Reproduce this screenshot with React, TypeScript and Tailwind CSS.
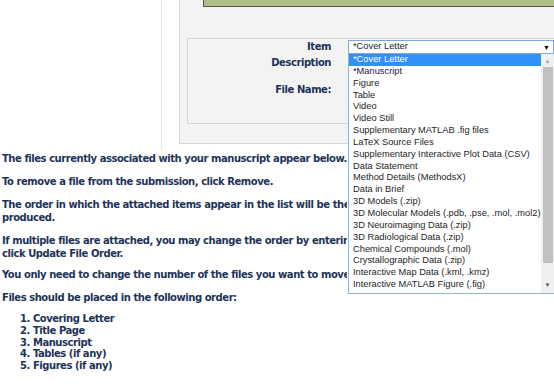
import React from "react";

const options = [
  "*Cover Letter",
  "*Manuscript",
  "Figure",
  "Table",
  "Video",
  "Video Still",
  "Supplementary MATLAB .fig files",
  "LaTeX Source Files",
  "Supplementary Interactive Plot Data (CSV)",
  "Data Statement",
  "Method Details (MethodsX)",
  "Data in Brief",
  "3D Models (.zip)",
  "3D Molecular Models (.pdb, .pse, .mol, .mol2)",
  "3D Neuroimaging Data (.zip)",
  "3D Radiological Data (.zip)",
  "Chemical Compounds (.mol)",
  "Crystallographic Data (.zip)",
  "Interactive Map Data (.kml, .kmz)",
  "Interactive MATLAB Figure (.fig)",
];

const order = ["Covering Letter", "Title Page", "Manuscript", "Tables (if any)", "Figures (if any)"];

export default function App() {
  return (
    <div className="relative h-[389px] w-[554px] overflow-hidden bg-white font-['DejaVu_Sans',Verdana,sans-serif] text-[#1d3358]">
      {/* Top: form panel */}
      <div className="flex h-[150px]">
        <div className="w-[162px] shrink-0 border-r border-[#e6e6e6]" />
        <div className="flex-1 pl-[17px]">
          <div className="h-[144px] border-b border-l border-[#d6d6d6] bg-[#f3f3f3]">
            <div className="ml-[23px] h-[7px] border-b border-l border-[#555] bg-[#adbf86]" />
            <div className="ml-[7px] mt-[31px] h-[86px] border-b border-l border-t border-[#d3d3d3] text-[10px] font-bold tracking-[-0.45px]">
              <div className="flex w-[143px] flex-col items-end leading-[13px]">
                <div className="mt-[1px]">Item</div>
                <div className="mt-[3px]">Description</div>
                <div className="mt-[14px]">File Name:</div>
              </div>
            </div>
          </div>
        </div>
      </div>

      {/* Instructions (right part hidden behind the open dropdown) */}
      <div className="w-[347px] overflow-hidden whitespace-nowrap pl-[2px] pt-[2px] text-[10px] font-bold leading-[13px] tracking-[-0.45px]">
        <p>The files currently associated with your manuscript appear below.</p>
        <p className="mt-[10px]">To remove a file from the submission, click Remove.</p>
        <p className="mt-[10px]">
          The order in which the attached items appear in the list will be the
          <br />
          produced.
        </p>
        <p className="mt-[10px]">
          If multiple files are attached, you may change the order by enterin
          <br />
          click Update File Order.
        </p>
        <p className="mt-[8px]">You only need to change the number of the files you want to move;</p>
        <p className="mt-[10px]">Files should be placed in the following order:</p>
        <ol className="mt-[9px] pl-[18px] leading-[11.8px]">
          {order.map((o, i) => (
            <li key={o}>
              {i + 1}. {o}
            </li>
          ))}
        </ol>
      </div>

      {/* Open select with dropdown */}
      <div className="absolute left-[348px] top-[40px] w-[206px] font-['Liberation_Sans',Arial,sans-serif] text-[9.3px] text-[#1e1e1e]">
        <div className="flex h-[14px] items-center justify-between border border-[#7fa8d8] bg-white pl-[4px] pr-[3px]">
          <span>*Cover Letter</span>
          <span className="text-[7px] leading-none text-black">▼</span>
        </div>
        <div className="flex h-[240px] border-b border-l border-[#8fb4de] bg-white">
          <div className="min-w-0 flex-1 overflow-hidden">
            {options.map((o, i) => (
              <div
                key={o}
                className={`h-[11.85px] whitespace-nowrap pl-[4px] leading-[11.85px] ${
                  i === 0 ? "bg-[#2f91fa] text-white" : ""
                }`}
              >
                {o}
              </div>
            ))}
          </div>
          <div className="flex w-[13px] shrink-0 flex-col items-center bg-[#f0f0f0]">
            <div className="mt-[2px] h-[10px] text-[6px] leading-[10px] text-[#a3a3a3]">▲</div>
            <div className="mt-[1px] h-[196px] w-[10px] bg-[#c1c1c1]" />
            <div className="mb-[3px] mt-auto h-[10px] text-[6px] leading-[10px] text-[#505050]">▼</div>
          </div>
        </div>
      </div>
    </div>
  );
}
